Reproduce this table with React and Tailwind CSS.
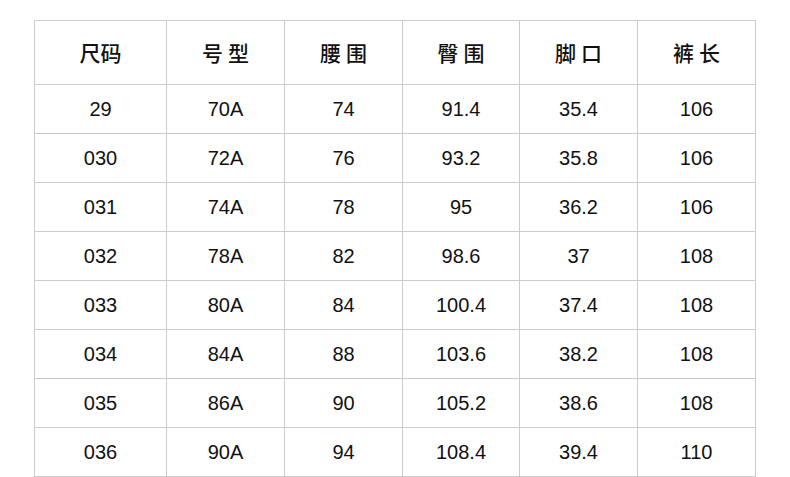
const headers = ['尺码', '号型', '腰围', '臀围', '脚口', '裤长']

const rows = [
  ['29', '70A', '74', '91.4', '35.4', '106'],
  ['030', '72A', '76', '93.2', '35.8', '106'],
  ['031', '74A', '78', '95', '36.2', '106'],
  ['032', '78A', '82', '98.6', '37', '108'],
  ['033', '80A', '84', '100.4', '37.4', '108'],
  ['034', '84A', '88', '103.6', '38.2', '108'],
  ['035', '86A', '90', '105.2', '38.6', '108'],
  ['036', '90A', '94', '108.4', '39.4', '110'],
]

export default function App() {
  return (
    <div className="w-[790px] h-[477px] bg-white pt-[20px] pl-[34px] font-['Liberation_Sans','Noto_Sans_CJK_SC',sans-serif] text-[#111]">
      <div className="inline-grid grid-cols-[131px_117px_117px_116px_117px_117px] grid-rows-[63px_repeat(8,48px)] gap-px bg-[#cccccc] border border-[#cccccc]">
        {headers.map((h, i) => (
          <div key={h} className="bg-white flex items-center justify-center">
            <span className={i === 0 ? "text-[21px] font-medium font-['Noto_Sans_CJK_SC',sans-serif]" : "text-[21px] font-medium tracking-[5px] pl-[5px] font-['Noto_Sans_CJK_SC',sans-serif]"}>
              {h}
            </span>
          </div>
        ))}
        {rows.map((r, i) =>
          r.map((c, j) => (
            <div key={i + '-' + j} className="bg-white flex items-center justify-center text-[20px]">
              {c}
            </div>
          ))
        )}
      </div>
    </div>
  )
}
